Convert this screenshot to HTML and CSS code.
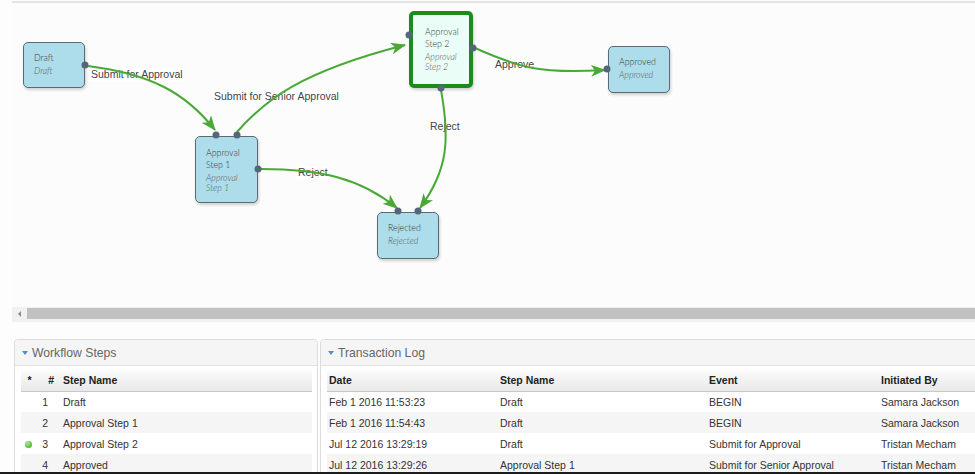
FILE: index.html
```html
<!DOCTYPE html>
<html lang="en">
<head>
    <meta charset="UTF-8">
    <title>Workflow Designer</title>
    <link rel="stylesheet" href="styles.css">
</head>
<body>
<div class="frame">
    <div class="designer">
        <div class="canvas">
            <div class="node node-draft">
                <div class="node-title">Draft</div>
                <div class="node-sub">Draft</div>
            </div>
            <div class="node node-step1">
                <div class="node-title">Approval Step 1</div>
                <div class="node-sub">Approval Step 1</div>
            </div>
            <div class="node node-current node-step2">
                <div class="node-title">Approval Step 2</div>
                <div class="node-sub">Approval Step 2</div>
            </div>
            <div class="node node-approved">
                <div class="node-title">Approved</div>
                <div class="node-sub">Approved</div>
            </div>
            <div class="node node-rejected">
                <div class="node-title">Rejected</div>
                <div class="node-sub">Rejected</div>
            </div>

            <span class="edge-label lbl-submit">Submit for Approval</span>
            <span class="edge-label lbl-senior">Submit for Senior Approval</span>
            <span class="edge-label lbl-approve">Approve</span>
            <span class="edge-label lbl-reject2">Reject</span>
            <span class="edge-label lbl-reject1">Reject</span>

            <svg class="edges" width="963" height="304" viewBox="12 3 963 304">
                <defs>
                    <marker id="arrow" viewBox="0 0 15 12" refX="14" refY="6" markerWidth="15" markerHeight="12" markerUnits="userSpaceOnUse" orient="auto">
                        <path d="M0,0 L15,6 L0,12 L4,6 Z" fill="#48aa34"/>
                    </marker>
                </defs>
                <g fill="none" stroke="#48aa34" stroke-width="2" marker-end="url(#arrow)">
                    <path d="M88,66 C150,74 185,92 215,130"/>
                    <path d="M237,132 C265,100 300,72 405,45"/>
                    <path d="M475,48 C520,68 540,74 605,70"/>
                    <path d="M441,90 C450,140 448,170 420,208"/>
                    <path d="M261,169 C320,169 360,178 397,208"/>
                </g>
                <g fill="#56667a">
                    <circle cx="85" cy="65" r="3.5"/>
                    <circle cx="216" cy="135" r="3.5"/>
                    <circle cx="237" cy="135" r="3.5"/>
                    <circle cx="258" cy="169" r="3.5"/>
                    <circle cx="409" cy="35" r="3.5"/>
                    <circle cx="473" cy="48" r="3.5"/>
                    <circle cx="441" cy="88" r="3.5"/>
                    <circle cx="607" cy="69" r="3.5"/>
                    <circle cx="398" cy="211" r="3.5"/>
                    <circle cx="418" cy="211" r="3.5"/>
                </g>
            </svg>
        </div>
        <div class="hscroll">
            <span class="hscroll-arrow"></span>
            <div class="hscroll-thumb"></div>
        </div>
    </div>

    <div class="panels">
        <section class="panel">
            <header class="panel-head"><span class="caret"></span>Workflow Steps</header>
            <div class="panel-body">
                <table class="grid steps">
                    <thead>
                        <tr><th class="col-star">*</th><th class="col-num">#</th><th class="col-name">Step Name</th></tr>
                    </thead>
                    <tbody>
                        <tr><td class="col-star"></td><td class="col-num">1</td><td class="col-name">Draft</td></tr>
                        <tr><td class="col-star"></td><td class="col-num">2</td><td class="col-name">Approval Step 1</td></tr>
                        <tr><td class="col-star"><span class="current-dot"></span></td><td class="col-num">3</td><td class="col-name">Approval Step 2</td></tr>
                        <tr><td class="col-star"></td><td class="col-num">4</td><td class="col-name">Approved</td></tr>
                    </tbody>
                </table>
            </div>
        </section>

        <section class="panel">
            <header class="panel-head"><span class="caret"></span>Transaction Log</header>
            <div class="panel-body">
                <table class="grid log">
                    <colgroup>
                        <col class="c-date"><col class="c-step"><col class="c-event"><col>
                    </colgroup>
                    <thead>
                        <tr><th>Date</th><th>Step Name</th><th>Event</th><th>Initiated By</th></tr>
                    </thead>
                    <tbody>
                        <tr><td>Feb 1 2016 11:53:23</td><td>Draft</td><td>BEGIN</td><td>Samara Jackson</td></tr>
                        <tr><td>Feb 1 2016 11:54:43</td><td>Draft</td><td>BEGIN</td><td>Samara Jackson</td></tr>
                        <tr><td>Jul 12 2016 13:29:19</td><td>Draft</td><td>Submit for Approval</td><td>Tristan Mecham</td></tr>
                        <tr><td>Jul 12 2016 13:29:26</td><td>Approval Step 1</td><td>Submit for Senior Approval</td><td>Tristan Mecham</td></tr>
                    </tbody>
                </table>
            </div>
        </section>
    </div>
</div>
</body>
</html>
```

FILE: styles.css
```css
* {
    box-sizing: border-box;
}

html, body {
    margin: 0;
}

body {
    background-color: #fdfdfd;
    font-family: "Liberation Sans", Arial, sans-serif;
    color: #333;
}

.frame {
    height: 474px;
    overflow: hidden;
    border-bottom: 2px solid #1c1c1c;
}

.designer {
    margin-left: 12px;
}

/* diagram canvas */
.canvas {
    position: relative;
    height: 306px;
    margin-top: 1px;
    border-top: 2px solid #e3e3e3;
    background-color: #fcfcfc;
}

.edges {
    position: absolute;
    left: 0;
    top: 0;
    z-index: 2;
}

.node {
    position: absolute;
    border: 1px solid #5d6a73;
    border-radius: 5px;
    background-color: #addcea;
    padding: 9px 4px 0 10px;
    box-shadow: 1px 2px 3px #0000002e;
    font-family: Lato, "DejaVu Sans", sans-serif;
    font-weight: 300;
    color: #3a3a3a;
}

.node-title {
    font-size: 8.8px;
    line-height: 12px;
}

.node-sub {
    margin-top: 1.5px;
    font-size: 8.8px;
    line-height: 10.5px;
    font-style: italic;
    color: #5c5c5c;
}

.node-current {
    border: 4px solid #1b8c1b;
    background-color: #ebfdf7;
    padding: 11px 2px 0 12px;
}

.node-draft { left: 11px; top: 39px; width: 62px; height: 46px; }
.node-step1 { left: 183px; top: 133px; width: 63px; height: 67px; padding-top: 10px; }
.node-step2 { left: 397px; top: 8px; width: 64px; height: 77px; }
.node-approved { left: 596px; top: 43px; width: 62px; height: 47px; }
.node-rejected { left: 365px; top: 209px; width: 62px; height: 47px; }

.edge-label {
    position: absolute;
    z-index: 1;
    padding: 0 1px;
    background-color: #ffffff;
    font-size: 10.5px;
    line-height: 13px;
    color: #444;
    white-space: nowrap;
}

.lbl-submit { left: 78px; top: 65px; }
.lbl-senior { left: 201px; top: 87px; }
.lbl-approve { left: 482px; top: 55px; }
.lbl-reject2 { left: 417px; top: 117px; }
.lbl-reject1 { left: 285px; top: 163px; }

/* horizontal scrollbar */
.hscroll {
    display: flex;
    align-items: center;
    height: 15px;
    padding: 1px 0 3px 0;
    background-color: #f1f1f1;
}

.hscroll-arrow {
    width: 0;
    height: 0;
    margin: 0 6px 0 6px;
    border-top: 3px solid transparent;
    border-bottom: 3px solid transparent;
    border-right: 3px solid #8a8a8a;
}

.hscroll-thumb {
    flex: 1;
    height: 11px;
    background-color: #c1c1c1;
}

/* bottom panels */
.panels {
    display: grid;
    grid-template-columns: 304px 680px;
    gap: 2px;
    margin: 17px 0 0 14px;
}

.panel {
    border: 1px solid #dcdcdc;
    border-radius: 4px 4px 0 0;
    background-color: #ffffff;
}

.panel-head {
    display: flex;
    align-items: center;
    gap: 4px;
    height: 26px;
    padding-left: 7px;
    border-bottom: 1px solid #e3e3e3;
    border-radius: 4px 4px 0 0;
    background-color: #f5f5f5;
    font-size: 12.2px;
    color: #666;
}

.caret {
    width: 0;
    height: 0;
    border-left: 3px solid transparent;
    border-right: 3px solid transparent;
    border-top: 4px solid #4a90d2;
}

.panel-body {
    padding: 4px 5px 0 6px;
}

.grid {
    width: 100%;
    border-collapse: collapse;
    table-layout: fixed;
    font-size: 10.5px;
}

.grid th {
    height: 21px;
    padding: 0 2px;
    text-align: left;
    font-weight: bold;
    color: #222;
    background: linear-gradient(#fbfbfb, #e8e8e8);
    border-bottom: 1px solid #c8c8c8;
}

.grid td {
    height: 21px;
    padding: 1px 2px 0 2px;
    color: #333;
    white-space: nowrap;
}

.grid tbody tr:nth-child(even) td {
    background-color: #f5f5f5;
}

.steps .col-star {
    width: 17px;
    text-align: center;
}

.steps td.col-star {
    text-align: left;
    padding-left: 4px;
}

.steps .col-num {
    width: 21px;
    text-align: right;
    padding-right: 11px;
}

.steps th.col-num {
    padding-right: 5px;
}

.steps .col-name {
    padding-left: 4px;
}

.current-dot {
    display: inline-block;
    width: 7px;
    height: 7px;
    margin-top: 2px;
    border-radius: 50%;
    background: radial-gradient(circle at 40% 35%, #a6f080, #2f9d1f);
}

.log .c-date { width: 171px; }
.log .c-step { width: 209px; }
.log .c-event { width: 172px; }
```
